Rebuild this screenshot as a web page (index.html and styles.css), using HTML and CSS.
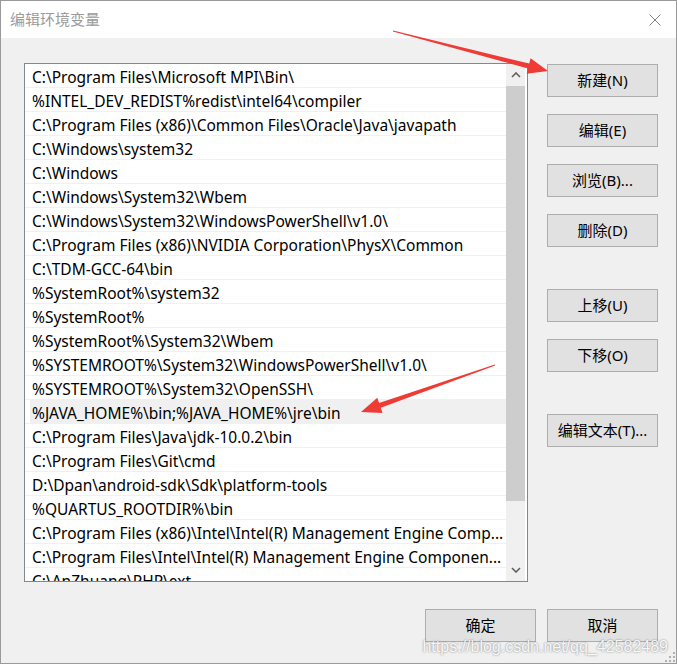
FILE: index.html
```html
<!DOCTYPE html>
<html lang="zh-CN">
<head>
    <meta charset="UTF-8">
    <title>编辑环境变量</title>
    <link rel="stylesheet" href="styles.css">
</head>
<body>

    <div class="dialog">
        <!-- Title bar -->
        <div class="titlebar">
            <span class="title">编辑环境变量</span>
            <span class="close">
                <svg width="12" height="12" viewBox="0 0 12 12"><path d="M0.5 0.5 L11.5 11.5 M11.5 0.5 L0.5 11.5" stroke="#808080" stroke-width="1" fill="none"/></svg>
            </span>
        </div>

        <div class="content">
            <div class="main">
                <!-- Path list -->
                <div class="listbox">
                    <div class="rows">
                        <div class="row">C:\Program Files\Microsoft MPI\Bin\</div>
                        <div class="row">%INTEL_DEV_REDIST%redist\intel64\compiler</div>
                        <div class="row">C:\Program Files (x86)\Common Files\Oracle\Java\javapath</div>
                        <div class="row">C:\Windows\system32</div>
                        <div class="row">C:\Windows</div>
                        <div class="row">C:\Windows\System32\Wbem</div>
                        <div class="row">C:\Windows\System32\WindowsPowerShell\v1.0\</div>
                        <div class="row">C:\Program Files (x86)\NVIDIA Corporation\PhysX\Common</div>
                        <div class="row">C:\TDM-GCC-64\bin</div>
                        <div class="row">%SystemRoot%\system32</div>
                        <div class="row">%SystemRoot%</div>
                        <div class="row">%SystemRoot%\System32\Wbem</div>
                        <div class="row">%SYSTEMROOT%\System32\WindowsPowerShell\v1.0\</div>
                        <div class="row">%SYSTEMROOT%\System32\OpenSSH\</div>
                        <div class="row selected">%JAVA_HOME%\bin;%JAVA_HOME%\jre\bin</div>
                        <div class="row">C:\Program Files\Java\jdk-10.0.2\bin</div>
                        <div class="row">C:\Program Files\Git\cmd</div>
                        <div class="row">D:\Dpan\android-sdk\Sdk\platform-tools</div>
                        <div class="row">%QUARTUS_ROOTDIR%\bin</div>
                        <div class="row">C:\Program Files (x86)\Intel\Intel(R) Management Engine Comp...</div>
                        <div class="row">C:\Program Files\Intel\Intel(R) Management Engine Componen...</div>
                        <div class="row">C:\AnZhuang\PHP\ext</div>
                    </div>
                    <!-- Vertical scrollbar -->
                    <div class="scrollbar">
                        <div class="sb-arrow">
                            <svg width="10" height="6" viewBox="0 0 10 6"><path d="M1 5 L5 1 L9 5" stroke="#606060" stroke-width="1.6" fill="none"/></svg>
                        </div>
                        <div class="sb-thumb"></div>
                        <div class="sb-track"></div>
                        <div class="sb-arrow">
                            <svg width="10" height="6" viewBox="0 0 10 6"><path d="M1 1 L5 5 L9 1" stroke="#606060" stroke-width="1.6" fill="none"/></svg>
                        </div>
                    </div>
                </div>

                <!-- Side buttons -->
                <div class="btn-col">
                    <button class="btn">新建(N)</button>
                    <button class="btn">编辑(E)</button>
                    <button class="btn">浏览(B)...</button>
                    <button class="btn">删除(D)</button>
                    <button class="btn spaced">上移(U)</button>
                    <button class="btn">下移(O)</button>
                    <button class="btn spaced">编辑文本(T)...</button>
                </div>
            </div>

            <div class="footer">
                <button class="btn">确定</button>
                <button class="btn">取消</button>
            </div>
        </div>

        <!-- Annotation arrows drawn over the dialog -->
        <svg class="annotations" width="677" height="664" viewBox="0 0 677 664">
            <polygon fill="#ee3b36" points="393.1,30.5 529.2,63.6 530.6,58.2 548,71 526.6,73.8 528,68.4 392.9,31.5"/>
            <polygon fill="#ee3b36" points="494.8,364.5 379.1,403 377.3,397.8 361,412 382.5,413 380.7,407.8 495.2,365.5"/>
        </svg>

        <div class="watermark">https://blog.csdn.net/qq_42582489</div>

        <svg class="grip" width="12" height="12" viewBox="0 0 12 12">
            <rect x="9" y="1" width="2" height="2" fill="#b0b0b0"/>
            <rect x="5" y="5" width="2" height="2" fill="#b0b0b0"/>
            <rect x="9" y="5" width="2" height="2" fill="#b0b0b0"/>
            <rect x="1" y="9" width="2" height="2" fill="#b0b0b0"/>
            <rect x="5" y="9" width="2" height="2" fill="#b0b0b0"/>
            <rect x="9" y="9" width="2" height="2" fill="#b0b0b0"/>
        </svg>
    </div>

</body>
</html>
```

FILE: styles.css
```css
body {
    margin: 0;
    font-family: "Noto Sans", "Noto Sans CJK SC", sans-serif;
    font-size: 15px;
    color: #000000;
    background-color: #f0f0f0;
}
.dialog {
    position: relative;
    width: 677px;
    height: 664px;
    box-sizing: border-box;
    border: 1px solid #9a9a9a;
    display: flex;
    flex-direction: column;
    overflow: hidden;
}
.titlebar {
    height: 37px;
    background-color: #ffffff;
    display: flex;
    align-items: center;
    justify-content: space-between;
    padding: 0 15px 0 9px;
    flex-shrink: 0;
}
.title {
    font-family: "Noto Sans CJK SC", sans-serif;
    color: #9b9b9b;
    font-size: 15px;
    margin-top: -2px;
}
.close {
    display: flex;
}
.content {
    flex: 1;
    background-color: #f0f0f0;
    padding: 25px 18px 0 23px;
    display: flex;
    flex-direction: column;
}
.main {
    display: flex;
    gap: 19px;
}
/* List box with scrollbar */
.listbox {
    width: 504px;
    height: 519px;
    box-sizing: border-box;
    border: 1px solid #828790;
    background-color: #ffffff;
    display: flex;
    padding-right: 2px;
}
.rows {
    flex: 1;
    overflow: hidden;
}
.row {
    height: 23px;
    line-height: 26px;
    font-size: 15.5px;
    border-bottom: 1px solid #f0f0f0;
    padding-left: 7px;
    white-space: nowrap;
    overflow: hidden;
}
.row.selected {
    background: linear-gradient(to right, #ffffff 5px, #f0f0f0 5px);
}
.scrollbar {
    width: 19px;
    background-color: #f0f0f0;
    display: flex;
    flex-direction: column;
}
.sb-arrow {
    height: 22px;
    display: flex;
    align-items: center;
    justify-content: center;
}
.sb-thumb {
    height: 415px;
    background-color: #cdcdcd;
}
.sb-track {
    flex: 1;
}
/* Buttons */
.btn {
    width: 111px;
    height: 33px;
    background-color: #e1e1e1;
    border: 1px solid #adadad;
    font-family: "Noto Sans", "Noto Sans CJK SC", sans-serif;
    font-size: 15px;
    color: #000000;
    padding: 0 0 2px 0;
}
.btn-col {
    display: flex;
    flex-direction: column;
    gap: 17px;
    padding-top: 1px;
}
.btn-col .spaced {
    margin-top: 25px;
}
.footer {
    display: flex;
    justify-content: flex-end;
    gap: 11px;
    margin-top: 27px;
}
/* Overlays */
.annotations {
    position: absolute;
    left: -1px;
    top: -1px;
    pointer-events: none;
}
.watermark {
    position: absolute;
    right: 8px;
    bottom: 7px;
    font-family: "Liberation Sans", Arial, sans-serif;
    font-size: 16px;
    color: rgba(255, 255, 255, 0.92);
    text-shadow: 0 0 2px rgba(0, 0, 0, 0.5);
}
.grip {
    position: absolute;
    right: 0;
    bottom: 0;
}
```
